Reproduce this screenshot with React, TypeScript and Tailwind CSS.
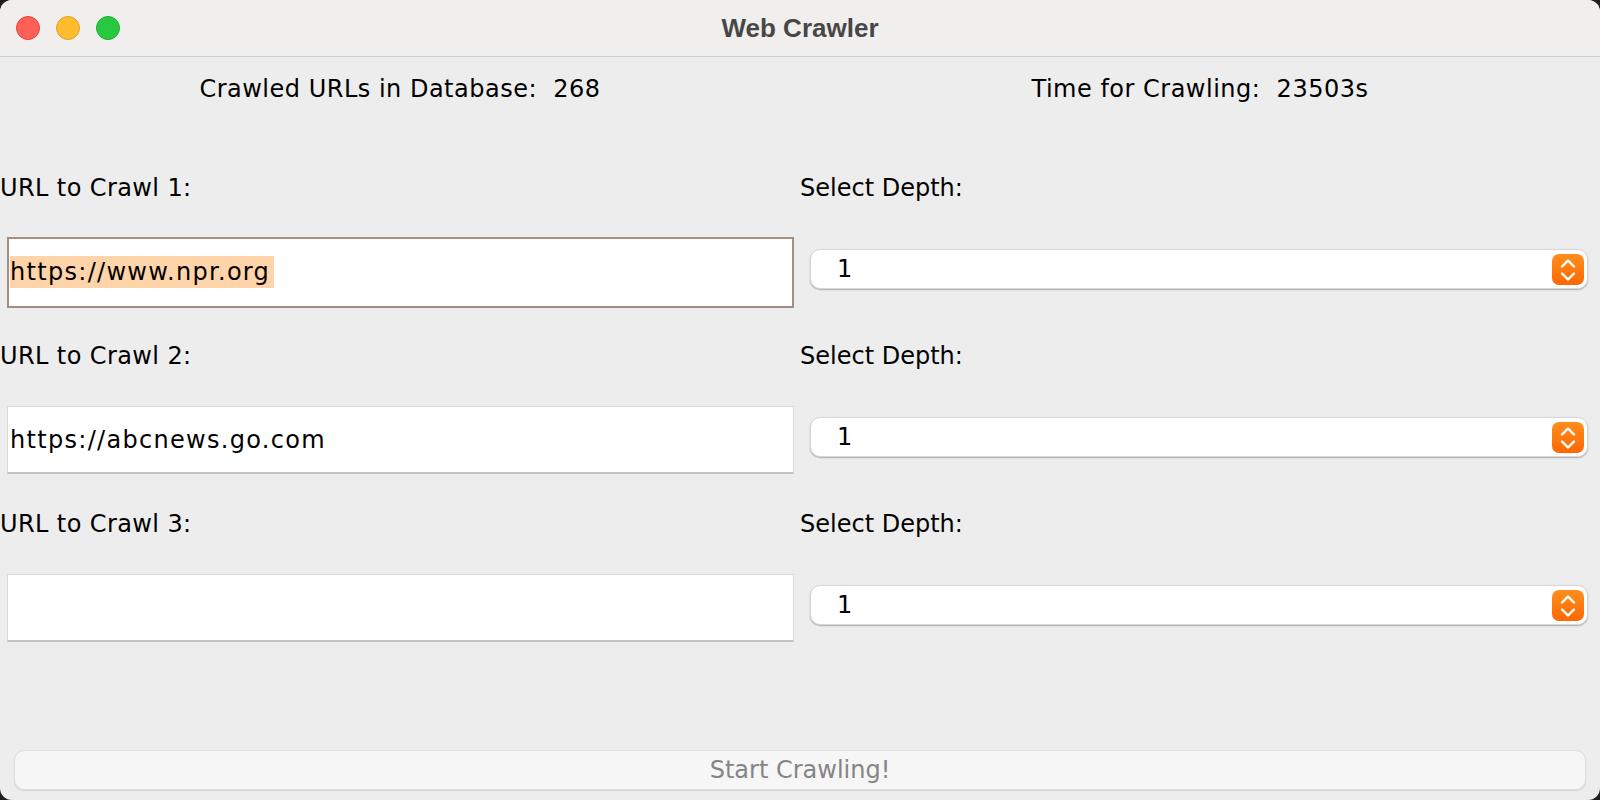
const rows = [
  { label: "URL to Crawl 1:", value: "https://www.npr.org", focused: true },
  { label: "URL to Crawl 2:", value: "https://abcnews.go.com", focused: false },
  { label: "URL to Crawl 3:", value: "", focused: false },
]

function DepthSelect() {
  return (
    <div className="mb-[6px] ml-[10px] mr-[12px] flex h-[40px] flex-1 items-center justify-between rounded-[10px] border border-[#d6d6d6] bg-white pl-[26px] pr-[3px] shadow-[0_1px_1.5px_rgba(0,0,0,0.28)]">
      <span className="text-[24px] leading-none text-black">1</span>
      <div className="flex h-[31px] w-[32px] items-center justify-center rounded-[7px] bg-gradient-to-b from-[#ff8e1c] to-[#ff6700]">
        <svg width="32" height="31" viewBox="0 0 32 31" fill="none">
          <path
            d="M10 12.5 L16 6.5 L22 12.5 M10 19.5 L16 25.5 L22 19.5"
            stroke="white"
            strokeWidth="2.4"
            strokeLinecap="round"
            strokeLinejoin="round"
          />
        </svg>
      </div>
    </div>
  )
}

function UrlField({ value, focused }: { value: string; focused: boolean }) {
  return (
    <div
      className={`ml-[7px] mr-[6px] flex flex-1 items-center bg-white ${
        focused
          ? "h-[71px] border-2 border-[#a58d7f] pl-[1px]"
          : "h-[68px] border border-[#dadada] border-b-[2px] border-b-[#c2c2c2] pl-[2px]"
      }`}
    >
      {value && (
        <span
          className={`pr-[4px] text-[24px] leading-[32px] tracking-[1.3px] text-black ${
            focused ? "bg-[#ffd4a9]" : ""
          }`}
        >
          {value}
        </span>
      )}
    </div>
  )
}

export default function App() {
  return (
    <div className="h-[800px] w-[1600px] bg-[#1d1f23]">
      <div
        className="flex h-full w-full flex-col overflow-hidden rounded-[12px] bg-[#ededed]"
        style={{ fontFamily: '"DejaVu Sans", "Noto Sans", sans-serif' }}
      >
        {/* title bar */}
        <div className="relative flex h-[57px] shrink-0 items-center justify-center border-b border-[#cfcfcf] bg-[#f0efee]">
          <div className="absolute left-[16px] top-[16px] flex gap-[16px]">
            <span className="h-[24px] w-[24px] rounded-full border border-[#e2463f] bg-[#ff5f57]" />
            <span className="h-[24px] w-[24px] rounded-full border border-[#e1a125] bg-[#febc2e]" />
            <span className="h-[24px] w-[24px] rounded-full border border-[#1eab34] bg-[#28c840]" />
          </div>
          <span
            className="text-[26px] font-bold text-[#474747]"
            style={{ fontFamily: '"Liberation Sans", Arial, sans-serif' }}
          >
            Web Crawler
          </span>
        </div>

        {/* stats */}
        <div className="grid h-[64px] shrink-0 grid-cols-2 items-center text-[24px] tracking-[0.5px] text-black">
          <div className="whitespace-pre text-center">Crawled URLs in Database:  268</div>
          <div className="whitespace-pre text-center">Time for Crawling:  23503s</div>
        </div>

        <div className="mt-[25px] grid grid-cols-2">
          {rows.map((row) => (
            <div key={row.label} className="contents">
              <div className="flex h-[84px] items-center text-[24px] tracking-[0.4px] text-black">
                {row.label}
              </div>
              <div className="flex h-[84px] items-center text-[24px] text-black">Select Depth:</div>
              <div className="flex h-[84px] items-center">
                <UrlField value={row.value} focused={row.focused} />
              </div>
              <div className="flex h-[84px] items-center">
                <DepthSelect />
              </div>
            </div>
          ))}
        </div>

        <div className="flex-1" />

        <button className="mx-[14px] mb-[10px] flex h-[40px] items-center justify-center rounded-[10px] border border-[#e0e0e0] bg-[#f6f6f6] text-[24px] text-[#858585] shadow-[0_1px_1px_rgba(0,0,0,0.12)]">
          Start Crawling!
        </button>
      </div>
    </div>
  )
}
